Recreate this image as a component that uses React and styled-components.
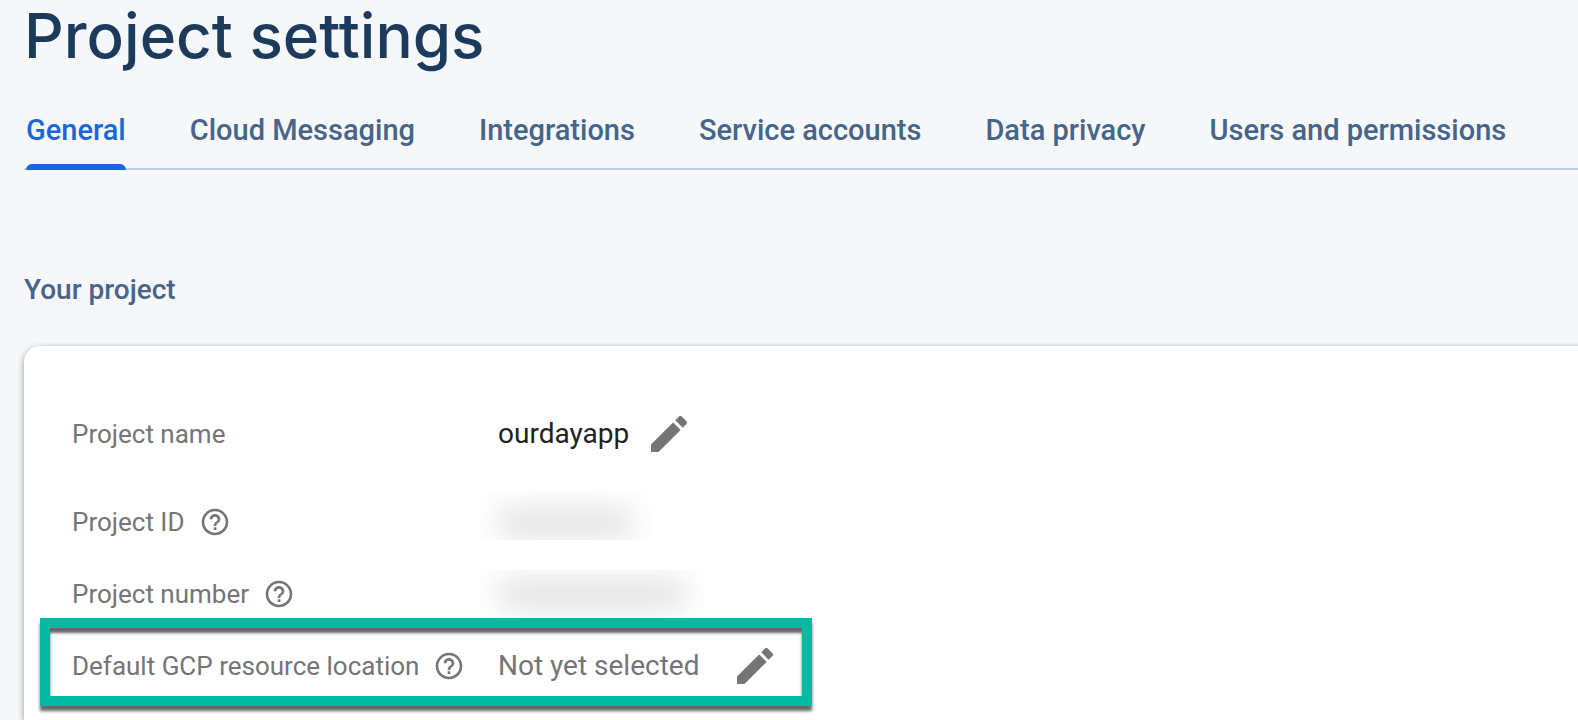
import React from 'react';
import styled, { createGlobalStyle } from 'styled-components';
import { MdEdit, MdHelpOutline } from 'react-icons/md';

const GlobalStyle = createGlobalStyle`
  *, *::before, *::after { box-sizing: border-box; }
  body {
    margin: 0;
    background: #f6f7f9;
    font-family: Roboto, "Liberation Sans", sans-serif;
  }
`;

const Page = styled.main`
  display: flex;
  flex-direction: column;
  min-height: 100vh;
  padding-left: 24px;
  overflow-x: clip;
`;

const Title = styled.h1`
  margin: 0;
  color: #1c3a5b;
  font-family: Inter, Roboto, sans-serif;
  font-size: 62px;
  font-weight: 500;
  line-height: 72px;
`;

const Tabs = styled.div`
  display: flex;
  gap: 64px;
  margin-top: 42px;
  padding-left: 2px;
  border-bottom: 2px solid #c3d0e0;
`;

const Tab = styled.button`
  position: relative;
  padding: 0 0 22px;
  border: 0;
  background: none;
  color: ${(p) => (p.$active ? '#1967d8' : '#476489')};
  font: 500 29px/32px Roboto, sans-serif;
  white-space: nowrap;
  cursor: pointer;

  &::after {
    content: '';
    display: ${(p) => (p.$active ? 'block' : 'none')};
    position: absolute;
    inset: auto 0 -2px;
    height: 6px;
    border-radius: 6px 6px 0 0;
    background: #1967d8;
  }
`;

const SectionTitle = styled.h2`
  margin: 104px 0 40px;
  color: #476489;
  font-size: 28px;
  font-weight: 500;
  line-height: 32px;
`;

const Card = styled.section`
  flex: 1;
  margin-right: -24px;
  padding: 64px 48px 30px;
  border-top-left-radius: 16px;
  background: #fff;
  box-shadow: 0 2px 6px rgba(0, 0, 0, 0.4);
`;

const Row = styled.div`
  position: relative;
  display: flex;
  align-items: center;
  width: fit-content;
  min-height: ${(p) => p.$height || 48}px;
  margin-bottom: ${(p) => p.$space || 0}px;
`;

const HighlightedRow = styled(Row)`
  &::after {
    content: '';
    position: absolute;
    inset: -24px -33px -16px -32px;
    border: 10px solid #00bba2;
    box-shadow: 0 5px 3px rgba(0, 0, 0, 0.6), inset 0 5px 3px rgba(0, 0, 0, 0.6);
    pointer-events: none;
  }
`;

const Label = styled.div`
  display: flex;
  align-items: center;
  gap: 14px;
  flex: 0 0 426px;
  color: #757575;
  font-size: 26px;
  line-height: 32px;
`;

const Value = styled.span`
  color: ${(p) => (p.$muted ? '#757575' : '#212121')};
  font-size: 28px;
  line-height: 32px;
`;

const IconButton = styled.button`
  display: flex;
  margin: 0 0 0 ${(p) => p.$gap || 0}px;
  padding: 0;
  border: 0;
  background: none;
  color: #757575;
  cursor: pointer;
`;

const Redacted = styled.div`
  display: flex;
  align-self: flex-start;
  align-items: center;
  width: ${(p) => p.$width}px;
  height: 48px;
  margin-left: -20px;
  padding: ${(p) => p.$top}px 20px 0;
  overflow: hidden;

  &::before {
    content: '';
    flex: 1;
    height: 28px;
    border-radius: 8px;
    background: #e0e0e0;
    filter: blur(15px);
  }
`;

const tabs = [
  'General',
  'Cloud Messaging',
  'Integrations',
  'Service accounts',
  'Data privacy',
  'Users and permissions',
];

const Help = ({ topic }) => (
  <IconButton type="button" aria-label={`Help: ${topic}`}>
    <MdHelpOutline size={32} />
  </IconButton>
);

const Edit = ({ topic, gap }) => (
  <IconButton type="button" aria-label={`Edit ${topic}`} $gap={gap}>
    <MdEdit size={48} />
  </IconButton>
);

export default function App() {
  return (
    <>
      <GlobalStyle />
      <Page>
        <Title>Project settings</Title>
        <Tabs role="tablist">
          {tabs.map((name, i) => (
            <Tab key={name} type="button" role="tab" aria-selected={i === 0} $active={i === 0}>
              {name}
            </Tab>
          ))}
        </Tabs>
        <SectionTitle>Your project</SectionTitle>
        <Card>
          <Row $space={34}>
            <Label>Project name</Label>
            <Value>ourdayapp</Value>
            <Edit topic="project name" gap={16} />
          </Row>
          <Row $height={60} $space={18}>
            <Label>
              Project ID
              <Help topic="project ID" />
            </Label>
            <Redacted $width={174} $top={14} />
          </Row>
          <Row $space={24}>
            <Label>
              Project number
              <Help topic="project number" />
            </Label>
            <Redacted $width={228} $top={0} />
          </Row>
          <HighlightedRow>
            <Label>
              Default GCP resource location
              <Help topic="default GCP resource location" />
            </Label>
            <Value $muted>Not yet selected</Value>
            <Edit topic="default GCP resource location" gap={32} />
          </HighlightedRow>
        </Card>
      </Page>
    </>
  );
}
